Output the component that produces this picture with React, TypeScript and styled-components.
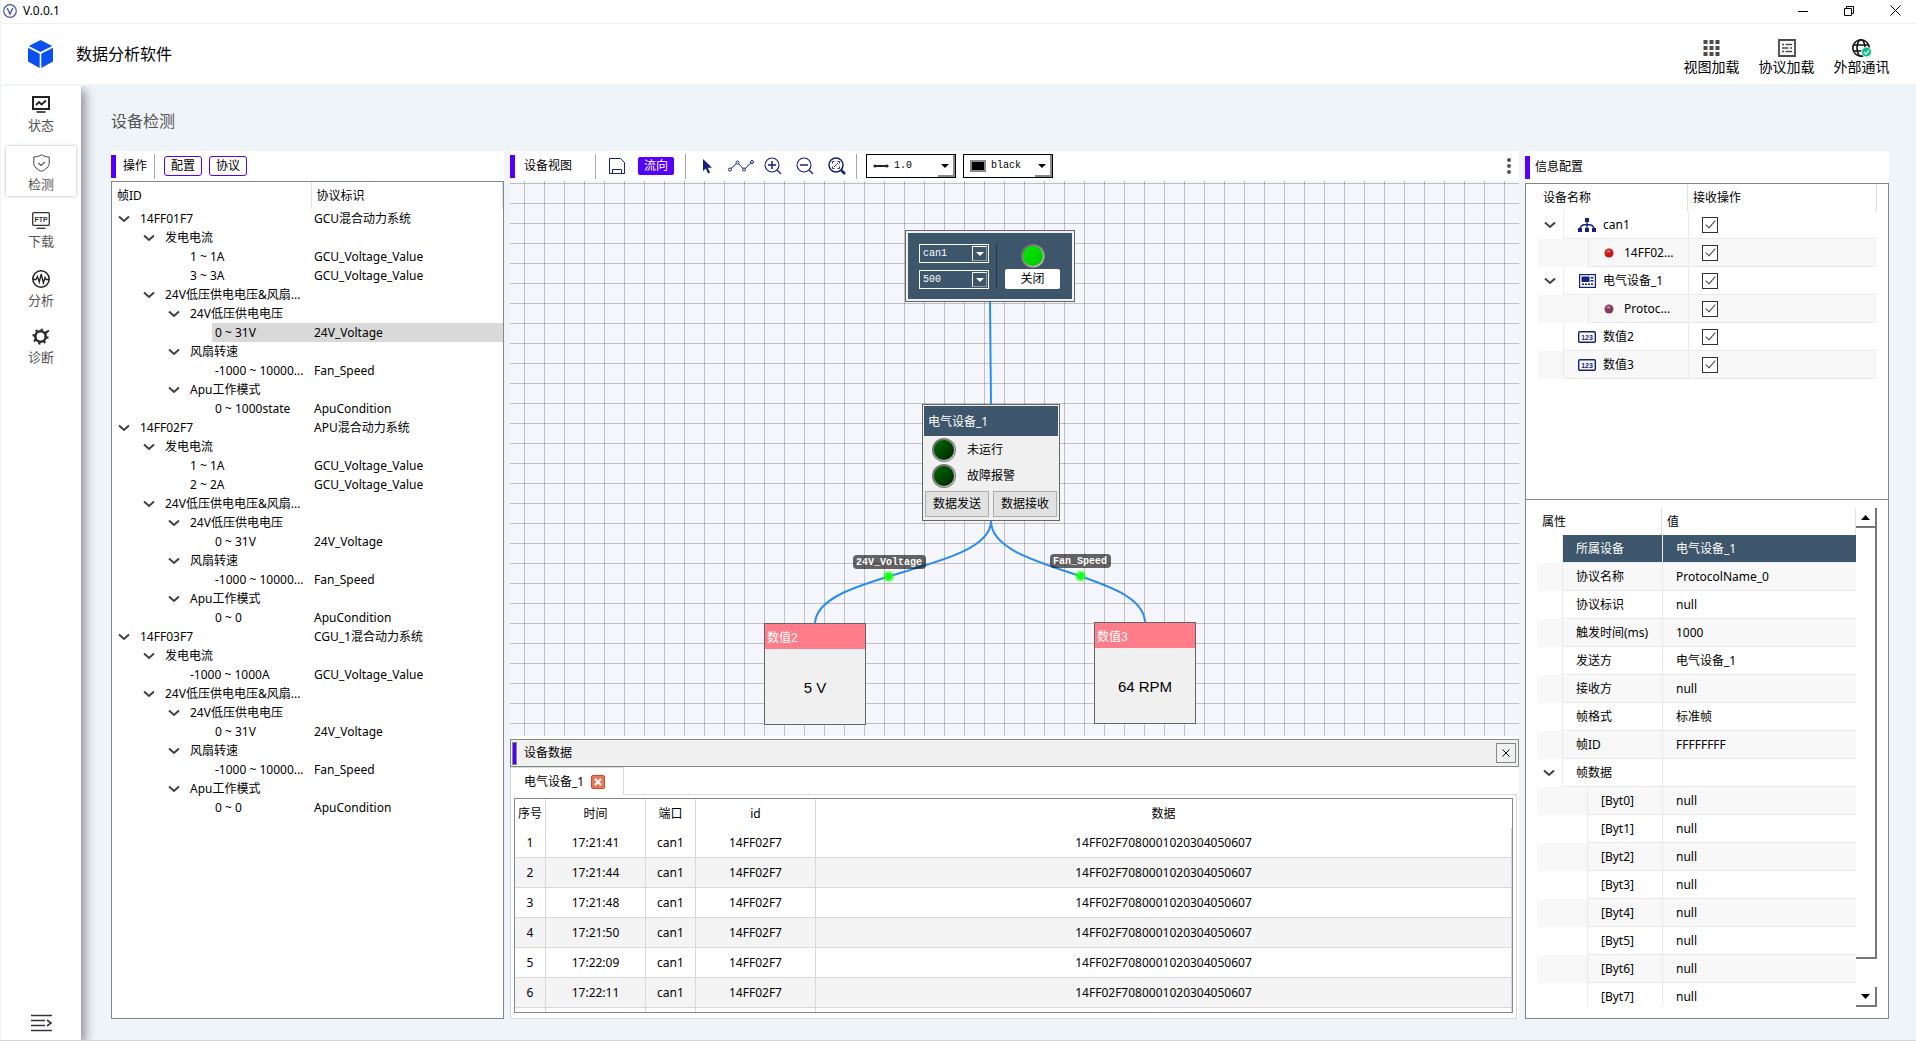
import React from 'react';
import styled, { createGlobalStyle } from 'styled-components';

const INK = '#14227e';
const SLATE = '#3d566b';
const VIOLET = '#5500ff';
const FRAME = '#828790';
const PAGE = '#eff4f8';

const GlobalStyle = createGlobalStyle`
  *, *::before, *::after { box-sizing: border-box; }
  body {
    margin: 0;
    font-family: "Noto Sans", "Noto Sans CJK SC", sans-serif;
    font-size: 12px;
    line-height: 18px;
    color: #000;
    background: ${PAGE};
  }
  button, select, input { font: inherit; color: inherit; margin: 0; }
  button { padding: 0; border: 0; background: none; cursor: pointer; }
  h1, h2 { margin: 0; font-weight: 400; }
  svg { display: block; flex: none; }
`;

/* ---------- window shell ---------- */

const Shell = styled.div`
  min-height: 100vh;
  display: flex;
  flex-direction: column;
  border-left: 1px solid ${PAGE};
  border-bottom: 1px solid #d3d6d9;
`;

const TitleBar = styled.div`
  height: 24px;
  display: flex;
  align-items: center;
  gap: 6px;
  padding: 0 0 2px 2px;
  background: #fff;
  border-bottom: 1px solid #f0f0f0;
`;

const WindowButtons = styled.div`
  margin-left: auto;
  display: flex;
  gap: 4px;
`;

const WindowButton = styled.button`
  width: 42px;
  height: 20px;
  display: grid;
  place-items: center;
`;

const Header = styled.header`
  height: 60px;
  display: flex;
  align-items: center;
  gap: 23px;
  padding: 0 17px 0 27px;
  background: #fff;
`;

const AppName = styled.h1`
  font-size: 16px;
  line-height: 24px;
`;

const HeaderActions = styled.div`
  margin-left: auto;
  padding-top: 7px;
  display: flex;
`;

const HeaderAction = styled.button`
  width: 75px;
  display: flex;
  flex-direction: column;
  align-items: center;
  gap: 1px;
  font-size: 14px;
  line-height: 18px;
`;

const Workspace = styled.div`
  flex: 1;
  display: flex;
  padding-top: 2px;
`;

const Sidebar = styled.nav`
  width: 80px;
  flex: none;
  display: flex;
  flex-direction: column;
  gap: 8px;
  padding: 2px 5px 8px;
  background: #fff;
  box-shadow: 4px 4px 10px rgba(40, 40, 50, 0.5);
  clip-path: inset(0 -20px 0 0);
`;

const NavItem = styled.a<{ $active?: boolean }>`
  height: 50px;
  display: flex;
  flex-direction: column;
  align-items: center;
  gap: 2px;
  padding-top: 8px;
  font-size: 13px;
  line-height: 20px;
  color: #555;
  text-decoration: none;
  background: #fff;
  box-shadow: ${(p) => (p.$active ? '0 0 3px rgba(0, 0, 0, 0.3)' : 'none')};
`;

const CollapseButton = styled.button`
  margin: auto auto 0;
`;

const Main = styled.main`
  flex: 1;
  min-width: 0;
  display: flex;
  flex-direction: column;
  padding: 0 27px 21px 30px;
`;

const PageTitle = styled.h2`
  height: 65px;
  padding-top: 23px;
  font-size: 16px;
  line-height: 24px;
  color: #555;
`;

const Columns = styled.div`
  flex: 1;
  display: grid;
  grid-template-columns: 393px minmax(0, 1fr) 364px;
  gap: 6px;
`;

const Panel = styled.section`
  min-width: 0;
  display: flex;
  flex-direction: column;
`;

const Toolbar = styled.div<{ $tall?: boolean }>`
  height: ${(p) => (p.$tall ? 32 : 30)}px;
  display: flex;
  align-items: center;
  background: #fff;
`;

const Accent = styled.span`
  width: 5px;
  height: 23px;
  flex: none;
  background: ${VIOLET};
`;

const Divider = styled.span`
  width: 1px;
  height: 25px;
  flex: none;
  background: #a9a9a9;
`;

const ToolbarTitle = styled.span<{ $width?: number; $inset?: number }>`
  width: ${(p) => (p.$width ? p.$width + 'px' : 'auto')};
  padding-left: ${(p) => p.$inset ?? 7}px;
`;

/* ---------- left tree ---------- */

const OutlineButton = styled.button`
  width: 38px;
  height: 20px;
  margin-left: 7px;
  border: 1px solid ${VIOLET};
  border-radius: 3px;
  background: #fff;
  line-height: 18px;
`;

const ButtonGroup = styled.div`
  display: flex;
  padding-left: 2px;
`;

const FramedBox = styled.div`
  flex: 1;
  border: 1px solid ${FRAME};
  background: #fff;
`;

const TreeTable = styled.table`
  width: 100%;
  table-layout: fixed;
  border-collapse: collapse;
  th {
    height: 27px;
    padding: 0 5px;
    text-align: left;
    font-weight: 400;
    border-right: 1px solid #e0e0e0;
  }
  td {
    height: 19px;
    padding: 0;
    line-height: 19px;
    white-space: nowrap;
  }
`;

const TreeCell = styled.div<{ $level: number }>`
  display: flex;
  padding-left: ${(p) => p.$level * 25}px;
`;

const TreeToggle = styled.span`
  width: 25px;
  display: grid;
  place-items: center;
  padding-right: 2px;
`;

const TreeLabel = styled.span<{ $selected?: boolean }>`
  flex: 1;
  padding-left: 3px;
  background: ${(p) => (p.$selected ? '#d9d9d9' : 'transparent')};
`;

const TreeValue = styled.td<{ $selected?: boolean }>`
  background: ${(p) => (p.$selected ? '#d9d9d9' : 'transparent')};
  && { padding-left: 3px; }
`;

/* ---------- centre ---------- */

const IconButton = styled.button<{ $width: number }>`
  width: ${(p) => p.$width}px;
  height: 24px;
  display: grid;
  place-items: center;
`;

const FlowButton = styled.button`
  width: 36px;
  height: 18px;
  margin-right: 11px;
  border-radius: 2px;
  color: #fff;
  background: ${VIOLET};
  line-height: 18px;
`;

const Pickers = styled.div`
  display: flex;
  gap: 7px;
  margin-left: 9px;
`;

const PickerFrame = styled.label`
  position: relative;
  width: 90px;
  height: 24px;
  display: flex;
  align-items: center;
  gap: 5px;
  padding-left: 6px;
  border: 1px solid #000;
  background: #fff;
  &::after {
    content: '';
    position: absolute;
    right: 0;
    bottom: 0;
    width: 17px;
    height: 22px;
    border: solid #8a8a8a;
    border-width: 0 2px 2px 0;
  }
  svg { z-index: 1; }
`;

const Picker = styled.select`
  appearance: none;
  flex: 1;
  min-width: 0;
  height: 20px;
  padding: 0;
  border: 0;
  background: transparent;
  font-family: "Liberation Mono", monospace;
  font-size: 10px;
`;

const PickerArrow = styled.span`
  width: 0;
  height: 0;
  margin-right: 6px;
  border: solid transparent;
  border-width: 4px 4px 0;
  border-top-color: #000;
`;

const MoreButton = styled.button`
  width: 20px;
  height: 24px;
  margin-left: auto;
  display: grid;
  place-items: center;
`;

const Canvas = styled.div`
  position: relative;
  flex: 1;
  min-height: 555px;
  overflow: hidden;
  background-color: #f5f6fb;
  background-image:
    linear-gradient(to right, rgba(0, 0, 0, 0.22) 1px, transparent 1px),
    linear-gradient(to bottom, rgba(0, 0, 0, 0.22) 1px, transparent 1px);
  background-size: 20px 20px;
  background-position: 14px 2px;
`;

const Wires = styled.svg`
  position: absolute;
  inset: 0;
  width: 100%;
  height: 100%;
`;

const Node = styled.div<{ $x: number; $y: number; $w: number }>`
  position: absolute;
  left: ${(p) => p.$x}px;
  top: ${(p) => p.$y}px;
  width: ${(p) => p.$w}px;
  border: 1px solid #666;
  background: #f0f0f0;
`;

const BusBody = styled.div`
  height: 66px;
  margin: 2px;
  display: flex;
  align-items: flex-start;
  padding: 11px 10px 0 11px;
  background: ${SLATE};
  color: #fff;
`;

const BusFields = styled.div`
  width: 70px;
  display: flex;
  flex-direction: column;
  gap: 7px;
`;

const BusField = styled.label`
  height: 19px;
  display: flex;
  align-items: center;
  padding-left: 3px;
  border: 1px solid #fff;
`;

const BusArrow = styled.span`
  width: 15px;
  height: 15px;
  margin-right: 1px;
  display: grid;
  place-items: center;
  border: 1px solid #fff;
  border-right-color: #999;
  border-bottom-color: #999;
  &::before {
    content: '';
    border: solid transparent;
    border-width: 4px 4px 0;
    border-top-color: #fff;
  }
`;

const BusDivider = styled.span`
  width: 1px;
  height: 44px;
  margin: 0 8px 0 7px;
  background: #26394a;
`;

const BusStatus = styled.div`
  width: 55px;
  display: flex;
  flex-direction: column;
  align-items: center;
  gap: 1px;
`;

const CloseBus = styled.button`
  width: 55px;
  height: 20px;
  border-radius: 2px;
  color: #000;
  background: #fff;
`;

const DeviceTitle = styled.div`
  height: 30px;
  margin: 1px;
  padding-left: 4px;
  line-height: 32px;
  color: #fff;
  background: ${SLATE};
`;

const DeviceRow = styled.div`
  height: 26px;
  display: flex;
  align-items: center;
  gap: 11px;
  padding-left: 9px;
`;

const DeviceButtons = styled.div`
  display: flex;
  gap: 4px;
  padding: 2px 2px 3px;
`;

const DeviceButton = styled.button`
  flex: 1;
  height: 26px;
  border: 1px solid #adadad;
  background: #e1e1e1;
`;

const ValueTitle = styled.div`
  height: 25px;
  padding-left: 2px;
  line-height: 28px;
  font-family: "Liberation Sans", "Noto Sans CJK SC", sans-serif;
  color: #fff;
  background: #ff7d8a;
`;

const ValueReadout = styled.div`
  height: 75px;
  text-align: center;
  line-height: 77px;
  font-family: "Liberation Sans", sans-serif;
  font-size: 15px;
`;

const WireLabel = styled.span<{ $x: number; $y: number }>`
  position: absolute;
  left: ${(p) => p.$x}px;
  top: ${(p) => p.$y}px;
  height: 14px;
  padding: 0 4px 0 3px;
  border-radius: 4px;
  font: bold 10px/16px "Liberation Mono", monospace;
  color: #fff;
  background: rgba(0, 0, 0, 0.6);
`;

const Dock = styled.div`
  flex: none;
  padding-top: 3px;
  background: #fff;
`;

const DockTitle = styled.div`
  height: 28px;
  display: flex;
  align-items: center;
  padding: 0 2px 0 1px;
  border: 1px solid #828a82;
  background: #f0f0f0;
`;

const DockAccent = styled(Accent)`
  border: 1px solid #828a82;
`;

const DockClose = styled.button`
  width: 20px;
  height: 20px;
  margin-left: auto;
  display: grid;
  place-items: center;
  border: 1px solid #828a82;
`;

const TabStrip = styled.div`
  height: 28px;
  display: flex;
  padding-right: 2px;
`;

const Tab = styled.div`
  width: 114px;
  display: flex;
  align-items: center;
  gap: 7px;
  padding-left: 13px;
  border: 1px solid #d9d9d9;
  border-bottom: 0;
`;

const TabFill = styled.div`
  flex: 1;
  border-bottom: 1px solid #d9d9d9;
`;

const TabPane = styled.div`
  height: 224px;
  margin-right: 2px;
  padding: 3px;
  border: 1px solid #d9d9d9;
  border-top: 0;
`;

const TableFrame = styled.div`
  height: 215px;
  overflow: hidden;
  border: 1px solid ${FRAME};
`;

const DataTable = styled.table`
  width: 100%;
  table-layout: fixed;
  border-collapse: separate;
  border-spacing: 0;
  text-align: center;
  th, td { padding: 0; border-right: 1px solid #d8d8d8; }
  th { height: 29px; font-weight: 400; }
  td { height: 30px; border-bottom: 1px solid #d8d8d8; }
  tbody tr:nth-child(even) { background: #f4f4f4; }
  th:last-child { border-right-color: #fff; }
`;

/* ---------- right column ---------- */

const DevicePane = styled.div`
  height: 317px;
  padding: 0 11px 0 12px;
  border: 1px solid ${FRAME};
  background: #fff;
`;

const PropertyPane = styled.div`
  flex: 1;
  display: flex;
  padding: 8px 11px 11px 11px;
  border: 1px solid ${FRAME};
  border-top: 0;
  background: #fff;
`;

const PropertyScroll = styled.div`
  flex: 1;
  height: 498px;
  overflow: hidden;
`;

const GridTable = styled.table`
  width: 100%;
  table-layout: fixed;
  border-collapse: separate;
  border-spacing: 0;
  th {
    height: 27px;
    padding: 0 5px;
    text-align: left;
    font-weight: 400;
    border-right: 1px solid #e0e0e0;
  }
  td { height: 28px; padding: 0; white-space: nowrap; }
  tbody tr:nth-child(even) { background: #f8f8f8; }
`;

const GridName = styled.div`
  height: 28px;
  display: flex;
`;

const Gutter = styled.span<{ $level: number }>`
  width: ${(p) => p.$level * 25}px;
  flex: none;
  display: grid;
  place-items: center;
  padding-right: 2px;
`;

const GridLabel = styled.span<{ $selected?: boolean }>`
  flex: 1;
  display: flex;
  align-items: center;
  padding-left: 13px;
  border-left: 1px solid #ebebeb;
  border-bottom: 1px solid #ebebeb;
  color: ${(p) => (p.$selected ? '#fff' : '#000')};
  background: ${(p) => (p.$selected ? SLATE : 'transparent')};
`;

const DeviceLabel = styled(GridLabel)<{ $dot?: boolean }>`
  padding-left: ${(p) => (p.$dot ? 15 : 14)}px;
  gap: ${(p) => (p.$dot ? 10 : 7)}px;
`;

const GridValue = styled(GridLabel)`
  height: 28px;
`;

const Check = styled.input`
  appearance: none;
  width: 16px;
  height: 16px;
  border: 1px solid #333;
  background: #fff;
  display: grid;
  place-items: center;
  &:checked::before {
    content: '';
    width: 5px;
    height: 10px;
    margin-top: -3px;
    border: solid #444;
    border-width: 0 1px 1px 0;
    transform: rotate(42deg);
  }
`;

const ScrollBar = styled.div`
  width: 21px;
  display: flex;
  flex-direction: column;
`;

const ScrollArrow = styled.button`
  height: 20px;
  display: grid;
  place-items: center;
  border: solid #777;
  border-width: 0 2px 2px 0;
`;

const ScrollTrack = styled.div`
  flex: 1;
  padding-bottom: 28px;
`;

const ScrollThumb = styled.div`
  height: 100%;
  border: solid #777;
  border-width: 0 2px 2px 0;
`;

/* ---------- drawings ---------- */

const IconText = styled.text`
  font: bold 8px "Liberation Sans", sans-serif;
  text-anchor: middle;
`;

const Chevron = () => (
  <svg width="12" height="8" viewBox="0 0 12 8" fill="none" stroke="#404040" strokeWidth="2">
    <path d="M1 1.500 6 6l5-4.500" />
  </svg>
);

const Led = ({ on }: { on?: boolean }) => {
  const id = on ? 'led-on' : 'led-off';
  return (
    <svg width="24" height="24" viewBox="0 0 24 24">
      <defs>
        <linearGradient id={id} x1="0" y1="0" x2="1" y2="1">
          <stop offset="0" stopColor={on ? '#00f000' : '#006a00'} />
          <stop offset="1" stopColor={on ? '#00c400' : '#002400'} />
        </linearGradient>
        <linearGradient id={id + '-rim'} x1="0" y1="0" x2="1" y2="1">
          <stop offset="0" stopColor="#5c5c5c" />
          <stop offset="1" stopColor="#d0d0d0" />
        </linearGradient>
      </defs>
      <circle cx="12" cy="12" r="12" fill="#777" />
      <circle cx="12" cy="12" r="11.200" fill={`url(#${id}-rim)`} />
      <circle cx="12" cy="12" r="10" fill={`url(#${id})`} />
    </svg>
  );
};

const CubeLogo = () => (
  <svg width="25" height="28" viewBox="0 0 25 28" fill="#0a50f0">
    <path d="M12.500 0 24.200 6 12.500 12 .8 6z" />
    <path d="M0 7.800 11.700 13.800V28L0 21.500z" />
    <path d="M25 7.800 13.300 13.800V28L25 21.500z" />
  </svg>
);

const BadgeV = () => (
  <svg width="14" height="14" viewBox="0 0 14 14" fill="none" stroke="#4a55a8">
    <circle cx="7" cy="7" r="6.300" strokeWidth="1.200" />
    <path d="M4.200 4 7 10l2.800-6" strokeWidth="1.400" />
  </svg>
);

const StatusIcon = () => (
  <svg width="18" height="17" viewBox="0 0 18 17" fill="none" stroke="#222" strokeWidth="2">
    <path d="M1 1h16v12H1z" />
    <path d="M4 9 7 6l2.500 2.500L14 4.500" strokeWidth="1.800" />
    <path d="M4.500 16h9" strokeWidth="1.600" />
  </svg>
);

const ShieldIcon = () => (
  <svg width="17" height="18" viewBox="0 0 17 18" fill="none" stroke="#444">
    <path d="M8.500.7C6.500 2.200 3.500 3 .8 3v6c0 4 3.400 6.600 7.700 8.300C12.800 15.600 16.200 13 16.200 9V3c-2.700 0-5.700-.8-7.700-2.300z" />
    <path d="m5.300 8.800 2.700 2.700 4-3.700" strokeWidth="1.100" />
  </svg>
);

const FtpIcon = () => (
  <svg width="18" height="17" viewBox="0 0 18 17" fill="none" stroke="#333" strokeWidth="1.300">
    <rect x=".7" y=".7" width="16.600" height="12.600" rx="1" />
    <path d="M4.500 16.300h9" />
    <IconText x="9" y="9.500" fill="#333" stroke="none" style={{ fontSize: 7 }}>FTP</IconText>
  </svg>
);

const PulseIcon = () => (
  <svg width="18" height="18" viewBox="0 0 18 18" fill="none" stroke="#222" strokeWidth="1.500">
    <circle cx="9" cy="9" r="8.200" />
    <path d="M1 9.500h3L5.500 6.500 7.300 12 9.200 4l2.200 9L13 7.500l1 2h3" strokeWidth="1.300" />
  </svg>
);

const GearIcon = () => (
  <svg width="18" height="17" viewBox="0 0 18 17" fill="none" stroke="#2b2b2b">
    <circle cx="8.500" cy="8.500" r="5.200" strokeWidth="2.600" />
    <circle cx="8.500" cy="8.500" r="7" strokeWidth="2.200" strokeDasharray="2.200 3.300" />
    <path d="m12.500 5 4.500-2.500" strokeWidth="2" />
  </svg>
);

const CollapseIcon = () => (
  <svg width="21" height="18" viewBox="0 0 21 18" fill="none" stroke="#334" strokeWidth="1.600">
    <path d="M0 1.500h21M0 6.500h14M0 11.500h14M0 16.500h21M16 6l4 3-4 3" />
  </svg>
);

const ViewIcon = () => (
  <svg width="17" height="18" viewBox="0 0 17 18" fill="#4a4a4a">
    {[0, 6, 12].map((y) => [0, 6, 12].map((x) => <rect key={x + '-' + y} x={x + 0.5} y={y + 1} width="4" height="4" />))}
  </svg>
);

const ProtocolIcon = () => (
  <svg width="18" height="18" viewBox="0 0 18 18" fill="none" stroke="#4a4a4a" strokeWidth="1.800">
    <path d="M1 1h16v16H1z" />
    <path d="M4 5.500h2M7.500 5.500H14M4 9h6.500M12 9h2M4 12.500h2M7.500 12.500H14" strokeWidth="1.400" />
  </svg>
);

const GlobeIcon = () => (
  <svg width="20" height="18" viewBox="0 0 20 18" fill="none" stroke="#111" strokeWidth="1.600">
    <circle cx="9" cy="9" r="8.200" />
    <ellipse cx="9" cy="9" rx="4" ry="8.200" />
    <path d="M1.500 6h15M1.500 12h15" />
    <circle cx="14.500" cy="13" r="5" fill="#0bbf87" stroke="#fff" strokeWidth=".8" />
    <path d="m12 13 1.900 1.900 3.200-3.400" stroke="#fff" strokeWidth="1.400" />
  </svg>
);

const SaveIcon = () => (
  <svg width="16" height="16" viewBox="0 0 16 16" fill="none" stroke={INK}>
    <path d="M.5.500h11l4 4v11H.500zM3.500 15.500v-4h9v4M3.500 13.500v-2" />
  </svg>
);

const CursorIcon = () => (
  <svg width="11" height="15" viewBox="0 0 11 15" fill={INK}>
    <path d="M1 0v12l2.800-2.500L6 14.500l2-1-2.200-4.700H10z" />
  </svg>
);

const PolylineIcon = () => (
  <svg width="26" height="12" viewBox="0 0 26 12" fill="#fff" stroke={INK}>
    <path d="M2 9.500 9.500 2.500 16 9.500l8-7.500" fill="none" />
    <circle cx="2" cy="9.500" r="1.500" />
    <circle cx="9.500" cy="2.500" r="1.500" />
    <circle cx="16" cy="9.500" r="1.500" />
    <circle cx="24" cy="2" r="1.500" />
  </svg>
);

const ZoomIcon = ({ kind }: { kind: 'in' | 'out' | 'fit' }) => (
  <svg width="18" height="18" viewBox="0 0 18 18" fill="none" stroke={INK} strokeWidth={kind === 'fit' ? 1.5 : 1.1}>
    <circle cx="8" cy="8" r="7" />
    <path d="m13 13 4 4" strokeWidth={kind === 'fit' ? 2.5 : 1.3} />
    {kind !== 'fit' && <path d="M4 8h8" strokeWidth="1.500" />}
    {kind === 'in' && <path d="M8 4v8" strokeWidth="1.500" />}
    {kind === 'fit' && <path d="M4.500 6.500v-2h2M11.500 9.500v2h-2M9.500 4.500h2v2M4.500 9.500v2h2M6 10l4-4" strokeWidth=".9" />}
  </svg>
);

const WidthSample = () => (
  <svg width="16" height="6" viewBox="0 0 16 6" fill="#222">
    <path d="M1 2h14v2H1z" />
    <circle cx="2" cy="3" r="1.600" />
    <circle cx="14" cy="3" r="1.600" />
  </svg>
);

const ColourSample = () => (
  <svg width="16" height="12" viewBox="0 0 16 12">
    <path d="M1 1h14v10H1z" stroke="#8a8a8a" strokeWidth="2" />
  </svg>
);

const TabCloseIcon = () => (
  <svg width="14" height="14" viewBox="0 0 14 14">
    <rect x=".5" y=".5" width="13" height="13" rx="1.500" fill="#e27c58" stroke="#d5422f" />
    <path d="m4 4 6 6M10 4l-6 6" stroke="#fff" strokeWidth="2" />
  </svg>
);

const BusIcon = () => (
  <svg width="18" height="14" viewBox="0 0 18 14" fill={INK}>
    <path d="M7 0h4v4H7zM0 10h4v4H0zM7 10h4v4H7zM14 10h4v4h-4z" />
    <path d="M9 3v8M2 11C2 7.500 5 6.500 9 6.500s7 1 7 4.500" fill="none" stroke={INK} strokeWidth="1.300" />
  </svg>
);

const DeviceIcon = () => (
  <svg width="18" height="14" viewBox="0 0 18 14" fill={INK}>
    <rect x="1.600" y=".6" width="15.800" height="12.800" fill="none" stroke={INK} strokeWidth="1.200" />
    <path d="M3.500 2.500h8v5.500h-8zM12.500 3h3v1.500h-3zM12.500 6h3v1.500h-3zM4 9.500h2V11H4zM7 9.500h2V11H7zM10 9.500h2V11h-2zM13 9.500h2V11h-2z" />
  </svg>
);

const NumberIcon = () => (
  <svg width="18" height="12" viewBox="0 0 18 12" fill="none" stroke={INK}>
    <rect x=".7" y=".7" width="16.600" height="10.600" rx="1" strokeWidth="1.400" />
    <IconText x="9" y="8.500" fill={INK} stroke="none" style={{ fontSize: 7 }}>123</IconText>
  </svg>
);

const Bead = ({ colour }: { colour: string }) => (
  <svg width="10" height="10" viewBox="0 0 10 10">
    <circle cx="5" cy="5" r="4.500" fill={colour} />
    <ellipse cx="4.500" cy="3.300" rx="2.200" ry="1.400" fill="#fff" opacity=".35" />
  </svg>
);

const Triangle = ({ up }: { up?: boolean }) => (
  <svg width="9" height="5" viewBox="0 0 9 5">
    <path d={up ? 'M0 5h9L4.500 0z' : 'M0 0h9L4.500 5z'} />
  </svg>
);

/* ---------- data ---------- */

type TreeRow = { level: number; name: string; tag?: string; leaf?: boolean; selected?: boolean };

const node = (level: number, name: string, tag?: string): TreeRow => ({ level, name, tag });
const leaf = (level: number, name: string, tag: string, selected = false): TreeRow => ({ level, name, tag, leaf: true, selected });

const frames: TreeRow[] = [
  node(0, '14FF01F7', 'GCU混合动力系统'),
  node(1, '发电电流'),
  leaf(2, '1 ~ 1A', 'GCU_Voltage_Value'),
  leaf(2, '3 ~ 3A', 'GCU_Voltage_Value'),
  node(1, '24V低压供电电压&风扇...'),
  node(2, '24V低压供电电压'),
  leaf(3, '0 ~ 31V', '24V_Voltage', true),
  node(2, '风扇转速'),
  leaf(3, '-1000 ~ 10000...', 'Fan_Speed'),
  node(2, 'Apu工作模式'),
  leaf(3, '0 ~ 1000state', 'ApuCondition'),
  node(0, '14FF02F7', 'APU混合动力系统'),
  node(1, '发电电流'),
  leaf(2, '1 ~ 1A', 'GCU_Voltage_Value'),
  leaf(2, '2 ~ 2A', 'GCU_Voltage_Value'),
  node(1, '24V低压供电电压&风扇...'),
  node(2, '24V低压供电电压'),
  leaf(3, '0 ~ 31V', '24V_Voltage'),
  node(2, '风扇转速'),
  leaf(3, '-1000 ~ 10000...', 'Fan_Speed'),
  node(2, 'Apu工作模式'),
  leaf(3, '0 ~ 0', 'ApuCondition'),
  node(0, '14FF03F7', 'CGU_1混合动力系统'),
  node(1, '发电电流'),
  leaf(2, '-1000 ~ 1000A', 'GCU_Voltage_Value'),
  node(1, '24V低压供电电压&风扇...'),
  node(2, '24V低压供电电压'),
  leaf(3, '0 ~ 31V', '24V_Voltage'),
  node(2, '风扇转速'),
  leaf(3, '-1000 ~ 10000...', 'Fan_Speed'),
  node(2, 'Apu工作模式'),
  leaf(3, '0 ~ 0', 'ApuCondition'),
];

const navItems = [
  { label: '状态', icon: <StatusIcon /> },
  { label: '检测', icon: <ShieldIcon />, active: true },
  { label: '下载', icon: <FtpIcon /> },
  { label: '分析', icon: <PulseIcon /> },
  { label: '诊断', icon: <GearIcon /> },
];

const messageTimes = ['17:21:41', '17:21:44', '17:21:48', '17:21:50', '17:22:09', '17:22:11'];

const devices = [
  { level: 1, open: true, icon: <BusIcon />, name: 'can1' },
  { level: 2, icon: <Bead colour="#c81818" />, name: '14FF02...' },
  { level: 1, open: true, icon: <DeviceIcon />, name: '电气设备_1' },
  { level: 2, icon: <Bead colour="#863a5c" />, name: 'Protoc...' },
  { level: 1, icon: <NumberIcon />, name: '数值2' },
  { level: 1, icon: <NumberIcon />, name: '数值3' },
];

const properties = [
  { level: 1, name: '所属设备', value: '电气设备_1', selected: true },
  { level: 1, name: '协议名称', value: 'ProtocolName_0' },
  { level: 1, name: '协议标识', value: 'null' },
  { level: 1, name: '触发时间(ms)', value: '1000' },
  { level: 1, name: '发送方', value: '电气设备_1' },
  { level: 1, name: '接收方', value: 'null' },
  { level: 1, name: '帧格式', value: '标准帧' },
  { level: 1, name: '帧ID', value: 'FFFFFFFF' },
  { level: 1, name: '帧数据', value: '', open: true },
  ...[0, 1, 2, 3, 4, 5, 6, 7].map((n) => ({ level: 2, name: `[Byt${n}]`, value: 'null' })),
] as { level: number; name: string; value: string; open?: boolean; selected?: boolean }[];

/* ---------- sections ---------- */

const FramePanel = () => (
  <Panel>
    <Toolbar>
      <Accent />
      <ToolbarTitle $width={38}>操作</ToolbarTitle>
      <Divider />
      <ButtonGroup>
        <OutlineButton>配置</OutlineButton>
        <OutlineButton>协议</OutlineButton>
      </ButtonGroup>
    </Toolbar>
    <FramedBox>
      <TreeTable>
        <colgroup>
          <col style={{ width: 199 }} />
          <col />
        </colgroup>
        <thead>
          <tr>
            <th>帧ID</th>
            <th>协议标识</th>
          </tr>
        </thead>
        <tbody>
          {frames.map((row, i) => (
            <tr key={i}>
              <td>
                <TreeCell $level={row.level}>
                  <TreeToggle>{!row.leaf && <Chevron />}</TreeToggle>
                  <TreeLabel $selected={row.selected}>{row.name}</TreeLabel>
                </TreeCell>
              </td>
              <TreeValue $selected={row.selected}>{row.tag}</TreeValue>
            </tr>
          ))}
        </tbody>
      </TreeTable>
    </FramedBox>
  </Panel>
);

const ViewToolbar = () => (
  <Toolbar>
    <Accent />
    <ToolbarTitle $width={80} $inset={9}>设备视图</ToolbarTitle>
    <Divider />
    <IconButton $width={42} aria-label="保存"><SaveIcon /></IconButton>
    <FlowButton>流向</FlowButton>
    <Divider />
    <IconButton $width={42} aria-label="选择"><CursorIcon /></IconButton>
    <IconButton $width={26} aria-label="连线"><PolylineIcon /></IconButton>
    <IconButton $width={38} aria-label="放大"><ZoomIcon kind="in" /></IconButton>
    <IconButton $width={26} aria-label="缩小"><ZoomIcon kind="out" /></IconButton>
    <IconButton $width={38} aria-label="适应"><ZoomIcon kind="fit" /></IconButton>
    <Divider />
    <Pickers>
      <PickerFrame>
        <WidthSample />
        <Picker aria-label="线宽"><option>1.0</option></Picker>
        <PickerArrow />
      </PickerFrame>
      <PickerFrame>
        <ColourSample />
        <Picker aria-label="颜色"><option>black</option></Picker>
        <PickerArrow />
      </PickerFrame>
    </Pickers>
    <MoreButton aria-label="更多">
      <svg width="4" height="16" viewBox="0 0 4 16" fill="#555">
        <circle cx="2" cy="2" r="2" />
        <circle cx="2" cy="8" r="2" />
        <circle cx="2" cy="14" r="2" />
      </svg>
    </MoreButton>
  </Toolbar>
);

const Diagram = () => (
  <Canvas>
    <Wires fill="none" stroke="#2a8cf0" strokeWidth="2">
      <defs>
        <radialGradient id="glow">
          <stop offset="0.500" stopColor="#20ff20" stopOpacity="0.600" />
          <stop offset="1" stopColor="#20ff20" stopOpacity="0" />
        </radialGradient>
      </defs>
      <path d="M480 120 481 224M481 340C481 391 305 391 305 443M481 340C481 391 635 391 635 442" />
      {[[378.6, 395.5], [570.7, 395]].map(([x, y]) => (
        <g key={x} stroke="none">
          <circle cx={x} cy={y} r="7" fill="url(#glow)" />
          <circle cx={x} cy={y} r="4" fill="#20ff20" />
        </g>
      ))}
    </Wires>
    <WireLabel $x={343} $y={374}>24V_Voltage</WireLabel>
    <WireLabel $x={540} $y={373}>Fan_Speed</WireLabel>
    <Node $x={395} $y={49} $w={170}>
      <BusBody>
        <BusFields>
          <BusField>
            <Picker aria-label="端口"><option>can1</option></Picker>
            <BusArrow />
          </BusField>
          <BusField>
            <Picker aria-label="波特率"><option>500</option></Picker>
            <BusArrow />
          </BusField>
        </BusFields>
        <BusDivider />
        <BusStatus>
          <Led on />
          <CloseBus>关闭</CloseBus>
        </BusStatus>
      </BusBody>
    </Node>
    <Node $x={412} $y={223} $w={138}>
      <DeviceTitle>电气设备_1</DeviceTitle>
      <DeviceRow><Led />未运行</DeviceRow>
      <DeviceRow><Led />故障报警</DeviceRow>
      <DeviceButtons>
        <DeviceButton>数据发送</DeviceButton>
        <DeviceButton>数据接收</DeviceButton>
      </DeviceButtons>
    </Node>
    <Node $x={254} $y={442} $w={102}>
      <ValueTitle>数值2</ValueTitle>
      <ValueReadout>5 V</ValueReadout>
    </Node>
    <Node $x={584} $y={441} $w={102}>
      <ValueTitle>数值3</ValueTitle>
      <ValueReadout>64 RPM</ValueReadout>
    </Node>
  </Canvas>
);

const DataDock = () => (
  <Dock>
    <DockTitle>
      <DockAccent />
      <ToolbarTitle>设备数据</ToolbarTitle>
      <DockClose aria-label="关闭面板">
        <svg width="8" height="8" viewBox="0 0 8 8" stroke="#000"><path d="m.5.5 7 7M7.500.5l-7 7" /></svg>
      </DockClose>
    </DockTitle>
    <TabStrip>
      <Tab>
        电气设备_1
        <button aria-label="关闭标签"><TabCloseIcon /></button>
      </Tab>
      <TabFill />
    </TabStrip>
    <TabPane>
      <TableFrame>
        <DataTable>
          <colgroup>
            <col style={{ width: 31 }} />
            <col style={{ width: 100 }} />
            <col style={{ width: 50 }} />
            <col style={{ width: 120 }} />
            <col />
          </colgroup>
          <thead>
            <tr>
              <th>序号</th>
              <th>时间</th>
              <th>端口</th>
              <th>id</th>
              <th>数据</th>
            </tr>
          </thead>
          <tbody>
            {messageTimes.map((time, i) => (
              <tr key={time}>
                <td>{i + 1}</td>
                <td>{time}</td>
                <td>can1</td>
                <td>14FF02F7</td>
                <td>14FF02F7080001020304050607</td>
              </tr>
            ))}
            <tr>
              <td /><td /><td /><td /><td />
            </tr>
          </tbody>
        </DataTable>
      </TableFrame>
    </TabPane>
  </Dock>
);

const InfoPanel = () => (
  <Panel>
    <Toolbar $tall>
      <Accent />
      <ToolbarTitle $inset={5}>信息配置</ToolbarTitle>
    </Toolbar>
    <DevicePane>
      <GridTable>
        <colgroup>
          <col style={{ width: 150 }} />
          <col />
        </colgroup>
        <thead>
          <tr>
            <th>设备名称</th>
            <th>接收操作</th>
          </tr>
        </thead>
        <tbody>
          {devices.map((d) => (
            <tr key={d.name}>
              <td>
                <GridName>
                  <Gutter $level={d.level}>{d.open && <Chevron />}</Gutter>
                  <DeviceLabel $dot={d.level === 2}>{d.icon}{d.name}</DeviceLabel>
                </GridName>
              </td>
              <td>
                <GridValue>
                  <Check type="checkbox" defaultChecked aria-label={d.name} />
                </GridValue>
              </td>
            </tr>
          ))}
        </tbody>
      </GridTable>
    </DevicePane>
    <PropertyPane>
      <PropertyScroll>
        <GridTable>
          <colgroup>
            <col style={{ width: 125 }} />
            <col />
          </colgroup>
          <thead>
            <tr>
              <th>属性</th>
              <th>值</th>
            </tr>
          </thead>
          <tbody>
            {properties.map((p) => (
              <tr key={p.name}>
                <td>
                  <GridName>
                    <Gutter $level={p.level}>{p.open && <Chevron />}</Gutter>
                    <GridLabel $selected={p.selected}>{p.name}</GridLabel>
                  </GridName>
                </td>
                <td>
                  <GridValue $selected={p.selected}>{p.value}</GridValue>
                </td>
              </tr>
            ))}
          </tbody>
        </GridTable>
      </PropertyScroll>
      <ScrollBar>
        <ScrollArrow aria-label="向上"><Triangle up /></ScrollArrow>
        <ScrollTrack><ScrollThumb /></ScrollTrack>
        <ScrollArrow aria-label="向下"><Triangle /></ScrollArrow>
      </ScrollBar>
    </PropertyPane>
  </Panel>
);

export default function App() {
  return (
    <Shell>
      <GlobalStyle />
      <TitleBar>
        <BadgeV />
        V.0.0.1
        <WindowButtons>
          <WindowButton aria-label="最小化">
            <svg width="10" height="10" viewBox="0 0 10 10" stroke="#000"><path d="M0 5.500h10" /></svg>
          </WindowButton>
          <WindowButton aria-label="还原">
            <svg width="10" height="10" viewBox="0 0 10 10" fill="none" stroke="#000"><path d="M.5 2.500h7v7h-7zM2.500 2.500v-2h7v7h-2" /></svg>
          </WindowButton>
          <WindowButton aria-label="关闭">
            <svg width="11" height="11" viewBox="0 0 11 11" stroke="#000"><path d="m.5.5 10 10M10.500.5l-10 10" /></svg>
          </WindowButton>
        </WindowButtons>
      </TitleBar>
      <Header>
        <CubeLogo />
        <AppName>数据分析软件</AppName>
        <HeaderActions>
          <HeaderAction><ViewIcon />视图加载</HeaderAction>
          <HeaderAction><ProtocolIcon />协议加载</HeaderAction>
          <HeaderAction><GlobeIcon />外部通讯</HeaderAction>
        </HeaderActions>
      </Header>
      <Workspace>
        <Sidebar>
          {navItems.map((item) => (
            <NavItem key={item.label} href="#" $active={item.active}>
              {item.icon}
              {item.label}
            </NavItem>
          ))}
          <CollapseButton aria-label="展开菜单"><CollapseIcon /></CollapseButton>
        </Sidebar>
        <Main>
          <PageTitle>设备检测</PageTitle>
          <Columns>
            <FramePanel />
            <Panel>
              <ViewToolbar />
              <Diagram />
              <DataDock />
            </Panel>
            <InfoPanel />
          </Columns>
        </Main>
      </Workspace>
    </Shell>
  );
}
